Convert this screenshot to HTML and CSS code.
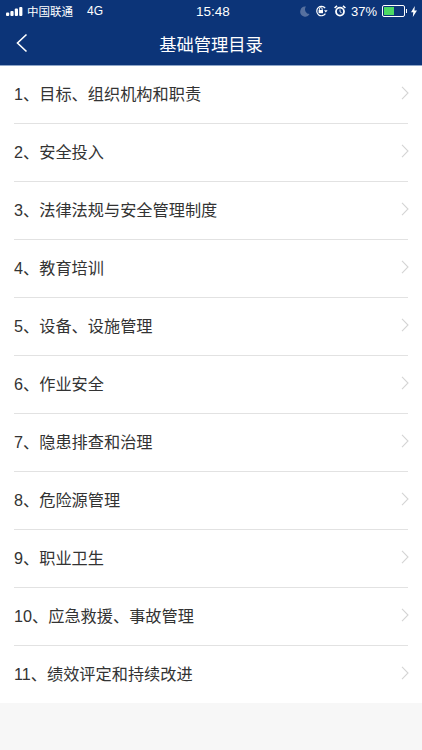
FILE: index.html
```html
<!DOCTYPE html>
<html lang="zh-CN">
<head>
  <meta charset="UTF-8">
  <meta name="viewport" content="width=device-width, initial-scale=1.0">
  <title>基础管理目录</title>
  <link rel="stylesheet" href="styles.css">
</head>
<body>
  <div class="header">
    <div class="status-bar">
      <div class="status-left">
        <svg class="signal" width="18" height="9" viewBox="0 0 18 9">
          <rect x="0" y="5.5" width="3.2" height="3.5" rx="1" fill="#fff"/>
          <rect x="4.4" y="4" width="3.2" height="5" rx="1" fill="#fff"/>
          <rect x="8.8" y="1.5" width="3.2" height="7.5" rx="1" fill="#fff"/>
          <rect x="13.2" y="0" width="3.2" height="9" rx="1" fill="#fff"/>
        </svg>
        <span>中国联通</span>
        <span class="network">4G</span>
      </div>
      <div class="status-time">15:48</div>
      <div class="status-right">
        <svg class="moon" width="10" height="11" viewBox="0 0 10 11">
          <path d="M6 .6A5 5 0 1 0 9.6 8 4.6 4.6 0 0 1 6 .6z" fill="#56709f"/>
        </svg>
        <svg class="lock" width="13" height="12" viewBox="0 0 13 12">
          <path d="M10.2 3.2A4.7 4.7 0 1 0 10.4 8.6" fill="none" stroke="#fff" stroke-width="1.2"/>
          <path d="M9 5.2h3.6L10.8 7.4z" fill="#fff"/>
          <rect x="3.6" y="5" width="4.4" height="3.2" fill="#fff"/>
          <path d="M4.4 5V4a1.4 1.4 0 0 1 2.8 0v1" fill="none" stroke="#fff" stroke-width=".9"/>
        </svg>
        <svg class="alarm" width="12" height="12" viewBox="0 0 12 12">
          <circle cx="6" cy="6.6" r="4" fill="none" stroke="#fff" stroke-width="1.8"/>
          <path d="M6 4.4v2.4l1.6 1" fill="none" stroke="#fff" stroke-width=".9"/>
          <path d="M.6 3 3 .8M11.4 3 9 .8" stroke="#fff" stroke-width="1.6"/>
        </svg>
        <span class="percent">37%</span>
        <div class="battery"><div class="battery-level"></div></div>
        <div class="battery-tip"></div>
        <svg class="bolt" width="6" height="11" viewBox="0 0 6 11">
          <path d="M3.8 0 0 6.2h2.3L1.8 11 6 4.4H3.4z" fill="#fff"/>
        </svg>
      </div>
    </div>
    <div class="nav-bar">
      <svg class="back" width="14" height="20" viewBox="0 0 14 20">
        <path d="M11.5 1.5 2.5 10l9 8.5" fill="none" stroke="#fff" stroke-width="1.6"/>
      </svg>
      <div class="nav-title">基础管理目录</div>
    </div>
  </div>

  <ul class="menu-list">
    <li class="menu-item"><span>1、目标、组织机构和职责</span><svg class="arrow" width="8" height="14" viewBox="0 0 8 14"><path d="M1 .8l6 6.2-6 6.2" fill="none" stroke="#d4d4d4" stroke-width="1.1"/></svg></li>
    <li class="menu-item"><span>2、安全投入</span><svg class="arrow" width="8" height="14" viewBox="0 0 8 14"><path d="M1 .8l6 6.2-6 6.2" fill="none" stroke="#d4d4d4" stroke-width="1.1"/></svg></li>
    <li class="menu-item"><span>3、法律法规与安全管理制度</span><svg class="arrow" width="8" height="14" viewBox="0 0 8 14"><path d="M1 .8l6 6.2-6 6.2" fill="none" stroke="#d4d4d4" stroke-width="1.1"/></svg></li>
    <li class="menu-item"><span>4、教育培训</span><svg class="arrow" width="8" height="14" viewBox="0 0 8 14"><path d="M1 .8l6 6.2-6 6.2" fill="none" stroke="#d4d4d4" stroke-width="1.1"/></svg></li>
    <li class="menu-item"><span>5、设备、设施管理</span><svg class="arrow" width="8" height="14" viewBox="0 0 8 14"><path d="M1 .8l6 6.2-6 6.2" fill="none" stroke="#d4d4d4" stroke-width="1.1"/></svg></li>
    <li class="menu-item"><span>6、作业安全</span><svg class="arrow" width="8" height="14" viewBox="0 0 8 14"><path d="M1 .8l6 6.2-6 6.2" fill="none" stroke="#d4d4d4" stroke-width="1.1"/></svg></li>
    <li class="menu-item"><span>7、隐患排查和治理</span><svg class="arrow" width="8" height="14" viewBox="0 0 8 14"><path d="M1 .8l6 6.2-6 6.2" fill="none" stroke="#d4d4d4" stroke-width="1.1"/></svg></li>
    <li class="menu-item"><span>8、危险源管理</span><svg class="arrow" width="8" height="14" viewBox="0 0 8 14"><path d="M1 .8l6 6.2-6 6.2" fill="none" stroke="#d4d4d4" stroke-width="1.1"/></svg></li>
    <li class="menu-item"><span>9、职业卫生</span><svg class="arrow" width="8" height="14" viewBox="0 0 8 14"><path d="M1 .8l6 6.2-6 6.2" fill="none" stroke="#d4d4d4" stroke-width="1.1"/></svg></li>
    <li class="menu-item"><span>10、应急救援、事故管理</span><svg class="arrow" width="8" height="14" viewBox="0 0 8 14"><path d="M1 .8l6 6.2-6 6.2" fill="none" stroke="#d4d4d4" stroke-width="1.1"/></svg></li>
    <li class="menu-item"><span>11、绩效评定和持续改进</span><svg class="arrow" width="8" height="14" viewBox="0 0 8 14"><path d="M1 .8l6 6.2-6 6.2" fill="none" stroke="#d4d4d4" stroke-width="1.1"/></svg></li>
  </ul>
</body>
</html>
```

FILE: styles.css
```css
body {
  font-family: "Liberation Sans", "Noto Sans CJK SC", sans-serif;
  background-color: #f7f7f7;
  margin: 0;
  height: 750px;
  overflow: hidden;
}

.header {
  background-color: #0c3478;
  color: #fff;
  height: 66px;
  border-bottom: 1px solid #8fa6c8;
  box-sizing: border-box;
}

.status-bar {
  display: grid;
  grid-template-columns: 1fr auto 1fr;
  align-items: center;
  height: 22px;
  padding: 0 5px 0 6px;
  font-size: 11.5px;
}

.status-left {
  display: flex;
  align-items: center;
}

.signal {
  margin-right: 3px;
}

.network {
  font-size: 12px;
  margin-left: 14px;
}

.status-time {
  font-size: 13.5px;
  margin-left: 3px;
}

.status-right {
  display: flex;
  align-items: center;
  justify-content: flex-end;
}

.moon {
  margin-right: 5px;
}

.lock {
  margin-right: 6px;
}

.alarm {
  margin-right: 5px;
}

.percent {
  font-size: 13px;
  margin-right: 5px;
}

.battery {
  width: 19px;
  height: 8px;
  border: 1px solid #fff;
  border-radius: 2px;
  padding: 1px;
  box-sizing: content-box;
}

.battery-level {
  width: 50%;
  height: 100%;
  background-color: #4cd964;
}

.battery-tip {
  width: 1px;
  height: 4px;
  background-color: #fff;
  margin: 0 4px 0 1px;
}

.nav-bar {
  display: flex;
  align-items: center;
  justify-content: center;
  position: relative;
  height: 43px;
}

.back {
  position: absolute;
  left: 15px;
  top: 11px;
}

.nav-title {
  font-size: 17.3px;
}

.menu-list {
  list-style: none;
  margin: 0;
  padding: 0 14px;
  background-color: #fff;
}

.menu-item {
  display: flex;
  align-items: center;
  justify-content: space-between;
  height: 58px;
  box-sizing: border-box;
  border-bottom: 1px solid #e2e2e2;
  font-size: 16.2px;
  color: #333;
  padding-bottom: 4px;
}

.menu-item:last-child {
  height: 57px;
  border-bottom: none;
}

.arrow {
  margin: 1px -1px 0 0;
}
```
